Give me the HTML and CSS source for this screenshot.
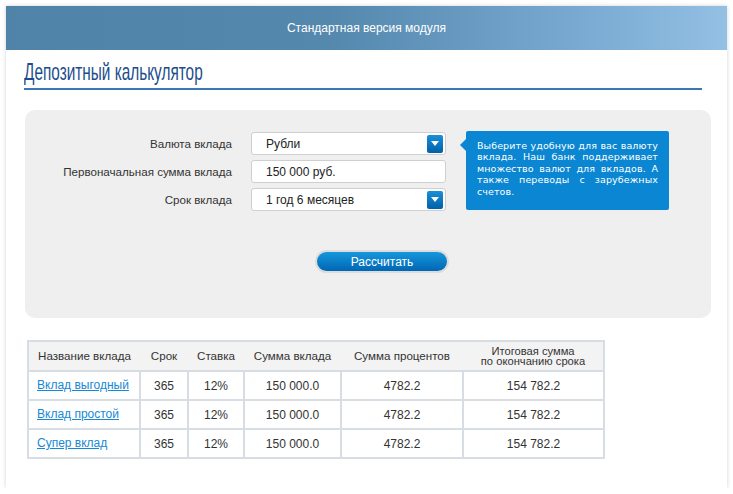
FILE: index.html
```html
<!DOCTYPE html>
<html lang="ru">
<head>
<meta charset="utf-8">
<title>Депозитный калькулятор</title>
<link rel="stylesheet" href="styles.css">
</head>
<body>
<div class="card">
  <div class="topbar">Стандартная версия модуля</div>
  <h1 class="title"><span class="title-text">Депозитный калькулятор</span></h1>
  <div class="panel">
    <div class="form">
      <div class="fields">
        <div class="row">
          <label class="lbl">Валюта вклада</label>
          <div class="ctrl select"><span>Рубли</span><span class="arrow"><svg width="8" height="5" viewBox="0 0 8 5"><path d="M0 0h8L4 5z" fill="#fff"/></svg></span></div>
        </div>
        <div class="row">
          <label class="lbl">Первоначальная сумма вклада</label>
          <div class="ctrl"><span>150 000 руб.</span></div>
        </div>
        <div class="row">
          <label class="lbl">Срок вклада</label>
          <div class="ctrl select"><span>1 год 6 месяцев</span><span class="arrow"><svg width="8" height="5" viewBox="0 0 8 5"><path d="M0 0h8L4 5z" fill="#fff"/></svg></span></div>
        </div>
      </div>
      <div class="tip">Выберите удобную для вас валюту вклада. Наш банк поддерживает множество валют для вкладов. А также переводы с зарубежных счетов.</div>
    </div>
    <button class="btn">Рассчитать</button>
  </div>
  <table class="results">
    <thead>
      <tr>
        <th class="c1">Название вклада</th>
        <th class="c2">Срок</th>
        <th class="c3">Ставка</th>
        <th class="c4">Сумма вклада</th>
        <th class="c5">Сумма процентов</th>
        <th class="c6">Итоговая сумма<br>по окончанию срока</th>
      </tr>
    </thead>
    <tbody>
      <tr><td class="name"><a href="#">Вклад выгодный</a></td><td>365</td><td>12%</td><td>150 000.0</td><td>4782.2</td><td>154 782.2</td></tr>
      <tr><td class="name"><a href="#">Вклад простой</a></td><td>365</td><td>12%</td><td>150 000.0</td><td>4782.2</td><td>154 782.2</td></tr>
      <tr><td class="name"><a href="#">Супер вклад</a></td><td>365</td><td>12%</td><td>150 000.0</td><td>4782.2</td><td>154 782.2</td></tr>
    </tbody>
  </table>
</div>
</body>
</html>
```
FILE: styles.css
```css
html, body { margin: 0; padding: 0; background: #fff; }
body { font-family: "Liberation Sans", Arial, sans-serif; color: #333; }

.card {
  margin: 6px 0 0 6px;
  width: 721px;
  height: 482px;
  background: #fff;
  box-shadow: 0 0 4px rgba(0,0,0,0.18);
  display: flex;
  flex-direction: column;
}

.topbar {
  height: 44px;
  background: linear-gradient(to right, #5083a8 0%, #5488ad 45%, #7aaad2 80%, #93c0e3 100%);
  color: #fff;
  font-family: "Liberation Sans", sans-serif;
  font-size: 12px;
  display: flex;
  align-items: center;
  justify-content: center;
  padding-bottom: 1px;
  box-sizing: border-box;
}

.title {
  margin: 8px 25px 0 18px;
  padding: 0;
  height: 30px;
  font-weight: normal;
  font-size: 24px;
  line-height: 28px;
  color: #1b4d8d;
  border-bottom: 2px solid #3b77b5;
  white-space: nowrap;
}
.title-text {
  display: inline-block;
  transform: scaleX(0.64);
  transform-origin: left center;
}

.panel {
  margin: 20px 16px 0 19px;
  height: 208px;
  background: #efefef;
  border-radius: 10px;
  box-sizing: border-box;
  padding-top: 22px;
}

.form { display: flex; align-items: flex-start; }

.fields { display: flex; flex-direction: column; gap: 5px; }

.row { display: flex; align-items: center; }

.lbl {
  width: 207px;
  text-align: right;
  font-size: 11.6px;
  color: #333;
  margin-right: 19px;
}

.ctrl {
  width: 195px;
  height: 23px;
  box-sizing: border-box;
  border: 1px solid #cfcfcf;
  border-radius: 3px;
  background: #fff;
  display: flex;
  align-items: center;
  justify-content: space-between;
  padding: 0 2px 0 14px;
  font-size: 12px;
  color: #222;
}

.arrow {
  width: 16px;
  height: 18px;
  border-radius: 2px;
  background: linear-gradient(#1a8fd8, #0060a8);
  display: flex;
  align-items: center;
  justify-content: center;
}

.tip {
  position: relative;
  margin-left: 20px;
  width: 203px;
  height: 79px;
  box-sizing: border-box;
  margin-top: -1px;
  background: #0a86d2;
  border-radius: 2px;
  color: #fff;
  font-family: "DejaVu Sans", sans-serif;
  font-size: 9.5px;
  line-height: 11.4px;
  text-align: justify;
  padding: 9px 11px 0 11px;
  letter-spacing: 0.1px;
}
.tip::before {
  content: "";
  position: absolute;
  left: -6px;
  top: 8px;
  border-style: solid;
  border-width: 6px 6px 6px 0;
  border-color: transparent #0a86d2 transparent transparent;
}

.btn {
  display: block;
  margin: 39px 0 0 290px;
  width: 134px;
  height: 23px;
  border-radius: 12px;
  border: 2px solid #dcdcdc;
  background: linear-gradient(#1797dd, #0066b3);
  color: #fff;
  font-family: "Liberation Sans", sans-serif;
  font-size: 12px;
  padding: 0;
}

.results {
  margin: 22px 0 0 21px;
  width: 574px;
  table-layout: fixed;
  border-collapse: collapse;
  font-size: 12px;
  border: 2px solid #d8dde3;
}
.results th {
  background: #f3f3f3;
  font-weight: normal;
  color: #333;
  height: 28px;
  padding: 0;
  font-size: 11.6px;
  line-height: 12px;
}
.results th.c6 { font-size: 11.2px; line-height: 10.5px; }
.results td {
  height: 27px;
  border: 2px solid #d8dde3;
  text-align: center;
  padding: 0;
  color: #333;
}
.results td.name { text-align: left; padding-left: 8px; vertical-align: top; padding-top: 6px; box-sizing: border-box; }
.results a { color: #1689d6; }
.c1 { width: 111px; }
.c2 { width: 48px; }
.c3 { width: 56px; }
.c4 { width: 97px; }
.c5 { width: 122px; }
.c6 { width: 140px; }
```
